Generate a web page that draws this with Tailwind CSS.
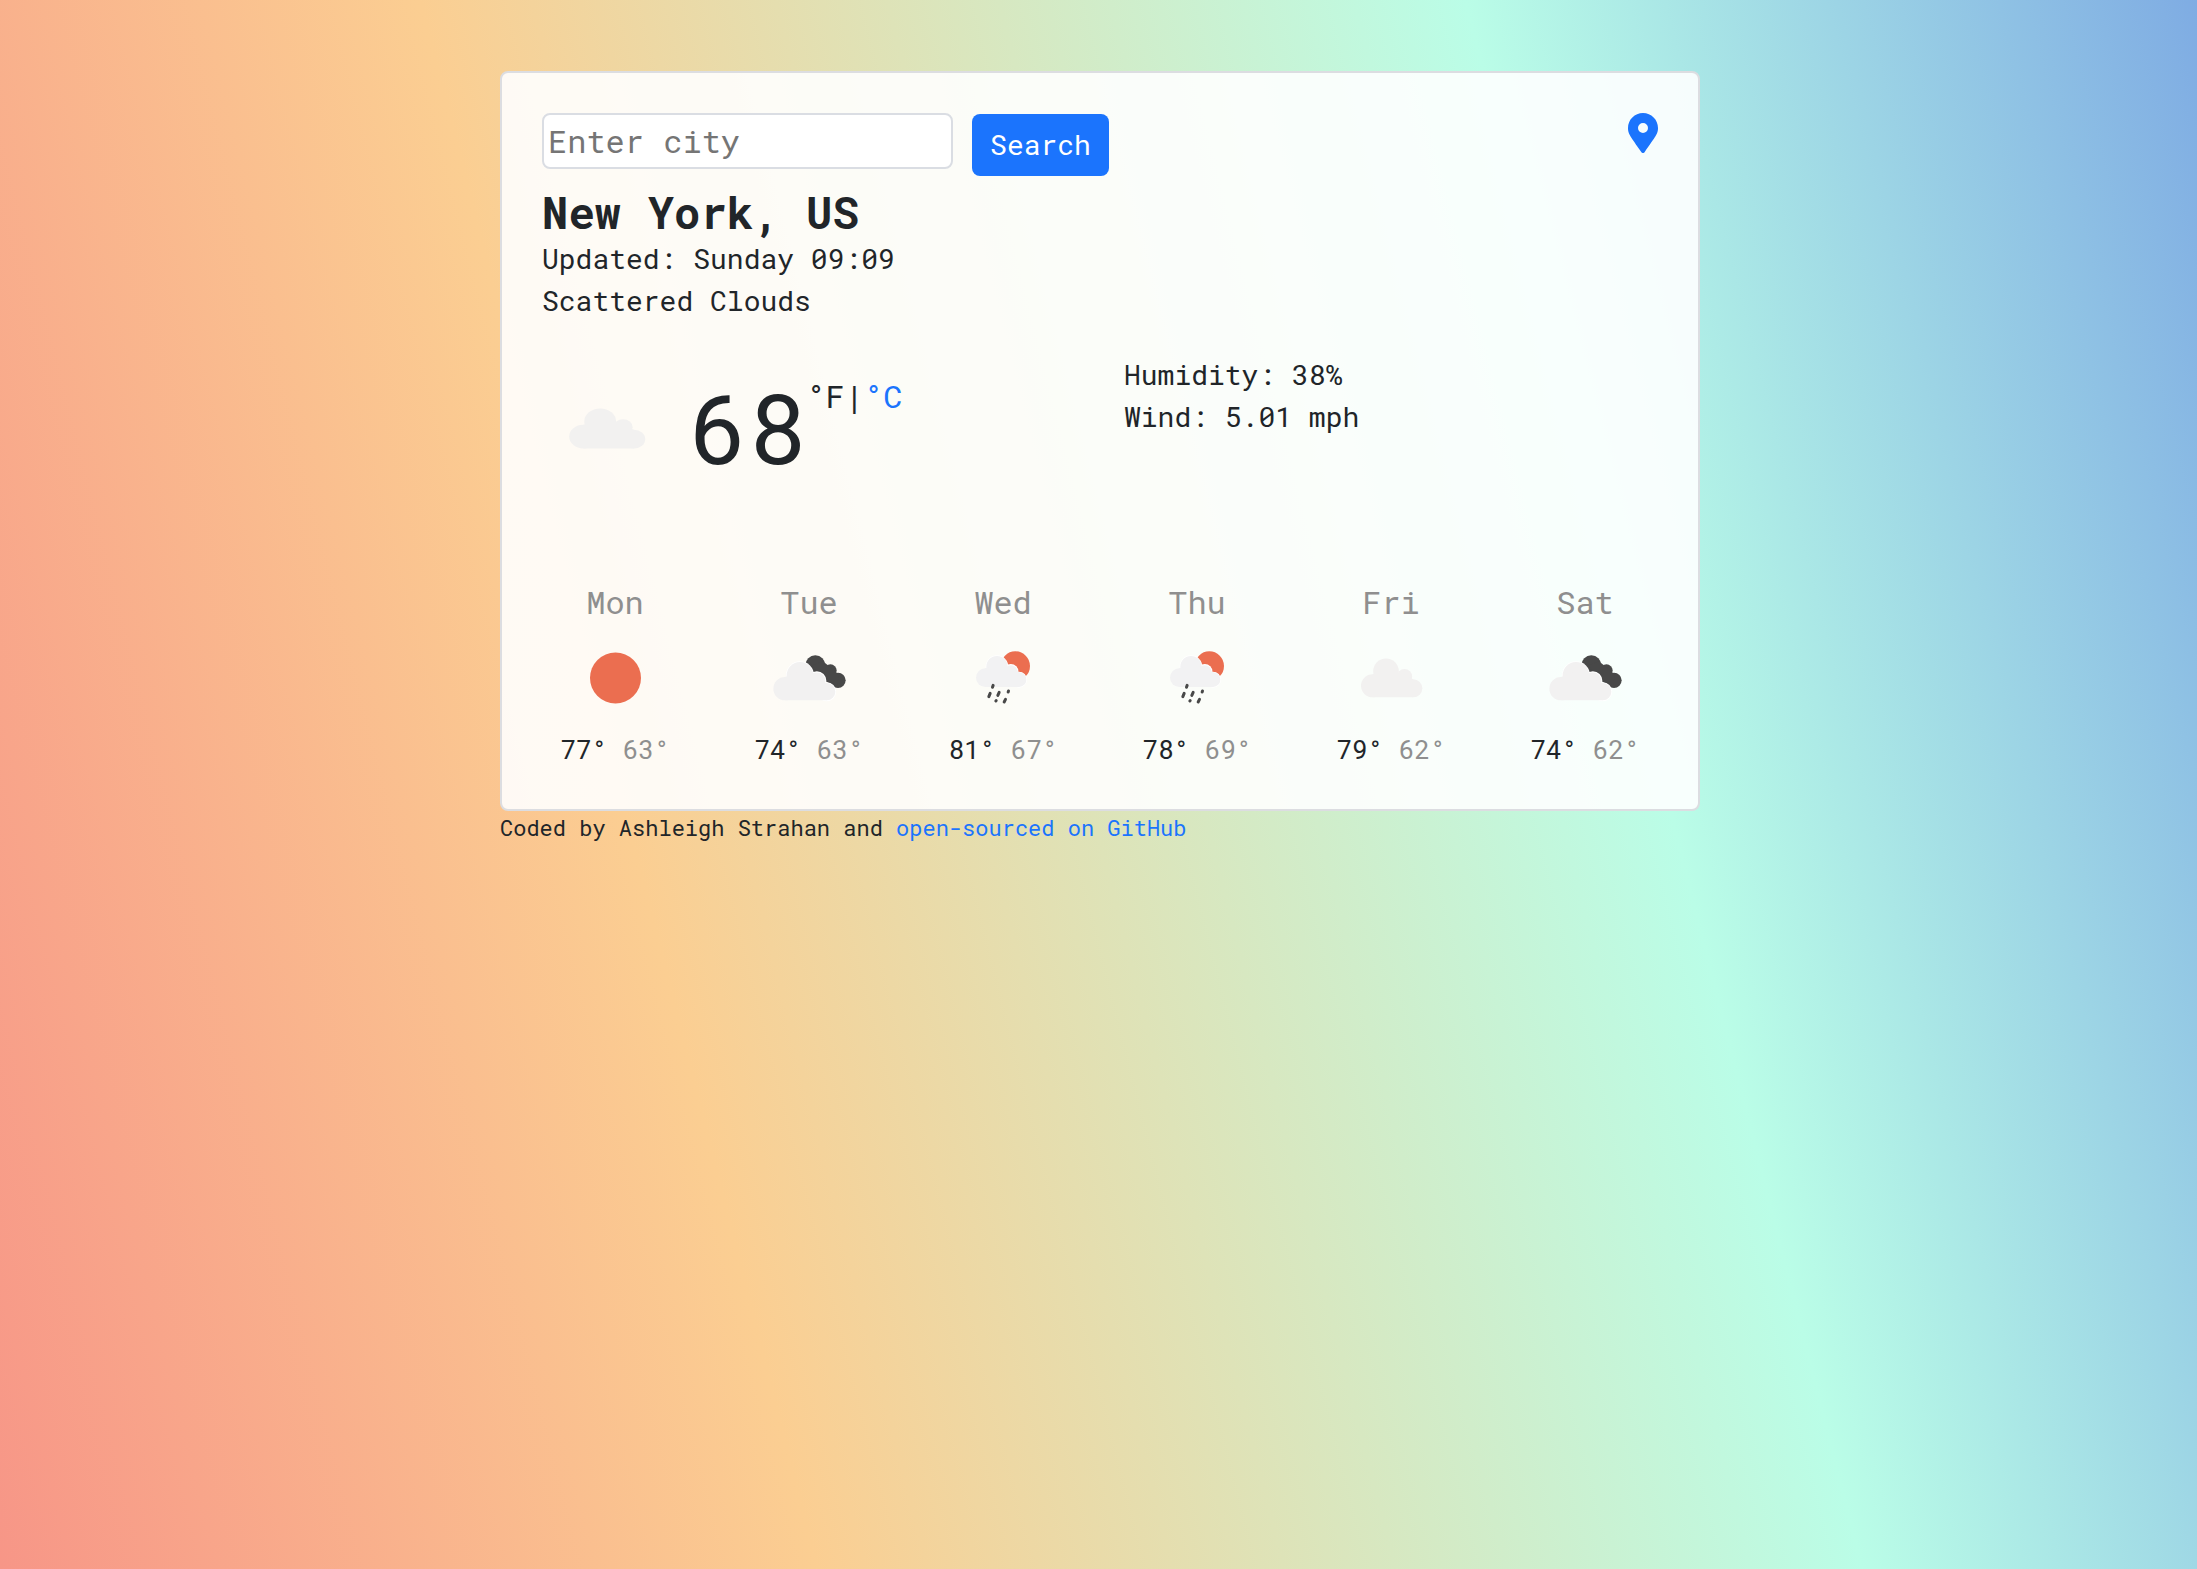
<!DOCTYPE html>
<html lang="en">
<head>
<meta charset="utf-8">
<title>Weather</title>
<script src="https://cdn.jsdelivr.net/npm/@tailwindcss/browser@4"></script>
</head>
<body class="h-screen overflow-hidden bg-[linear-gradient(75.8deg,#f79687_0%,#fbce92_31.5%,#bafde7_71.8%,#7facE3_100%)] font-['Roboto_Mono','DejaVu_Sans_Mono',monospace] text-[#212529]">
<svg width="0" height="0" class="absolute">
  <defs>
    <symbol id="cloud" viewBox="0 0 300 300" preserveAspectRatio="none">
      <g fill="#f2f1f0"><circle cx="93" cy="173.500" r="34.500"/><circle cx="133.500" cy="130" r="38.500"/><circle cx="189" cy="146" r="23"/><circle cx="215.500" cy="181" r="27"/><path d="M93 208V139L133 130L189 140L215 154V208z"/></g>
    </symbol>
    <symbol id="sun" viewBox="0 0 300 300"><circle cx="150" cy="150" r="76.500" fill="#eb6e50"/></symbol>
    <symbol id="broken" viewBox="0 0 300 300">
      <g fill="#484848"><circle cx="167.500" cy="112" r="30"/><circle cx="213" cy="127.500" r="18.500"/><circle cx="235.500" cy="157" r="23"/><path d="M160 112L190 100L213 118L238 140L232 178L180 150z"/></g>
      <g fill="#fff"><circle cx="121.500" cy="142" r="42"/><circle cx="172" cy="158" r="28.500"/><circle cx="201.500" cy="191" r="28.500"/></g>
      <g fill="#f2f1f1"><circle cx="76.500" cy="182" r="35"/><circle cx="121.500" cy="142" r="40"/><circle cx="172" cy="159" r="25.500"/><circle cx="201.500" cy="191" r="26"/><path d="M76.500 217V147L121 130L172 150L201 166V217z"/></g>
    </symbol>
    <symbol id="rain" viewBox="0 0 300 300">
      <circle cx="185.500" cy="114" r="44" fill="#eb6e50"/>
      <g fill="#fff"><circle cx="130.500" cy="116" r="34"/><circle cx="172" cy="131" r="23"/><circle cx="196.500" cy="155" r="24"/></g>
      <g fill="#f2f2f3"><circle cx="95.500" cy="149" r="28"/><circle cx="130.500" cy="116" r="32"/><circle cx="172" cy="132" r="20.500"/><circle cx="196.500" cy="155" r="22"/><path d="M95.500 177V121L130 110L172 120L196 133V177z"/></g>
      <path d="M119 172l-2 6M110 196l-4 10M137 193l-4 9M165 189l-1 3M128 218l-1 1M156 214l-4 8" stroke="#484848" stroke-width="9" stroke-linecap="round" fill="none"/>
    </symbol>
  </defs>
</svg>
<div class="ml-[500px] w-[1200px] pt-[71px]">
  <main class="h-[740px] w-full rounded-lg border-2 border-[#dcdde1] bg-white/90 px-10 pt-10">
    <div class="flex items-start">
      <input type="text" placeholder="Enter city" class="h-14 w-[411px] rounded-lg border-2 border-[#dadde3] bg-white px-1 pb-0.5 text-[32px] placeholder-[#757575]">
      <button class="mt-px ml-[19px] h-[62px] w-[137px] rounded-lg bg-[#1b74fd] text-[28px] text-white">Search</button>
      <svg class="ml-auto h-10 w-[30px]" viewBox="0 0 384 512"><path fill="#1b74fd" d="M192 0C86 0 0 86 0 192c0 77 27 99 172 310 10 14 30 14 40 0 145-211 172-233 172-310C384 86 298 0 192 0zm0 256a64 64 0 1 1 0-128 64 64 0 0 1 0 128z"/></svg>
    </div>
    <h1 class="mt-3 text-[44px] leading-[48px] font-bold">New York, US</h1>
    <ul class="pt-0.5 text-[28px] leading-[42px]">
      <li>Updated: Sunday 09:09</li>
      <li>Scattered Clouds</li>
    </ul>
    <section class="mt-8 grid h-56 grid-cols-2 gap-12">
      <div class="flex items-start pt-[21px] pl-[3px]">
        <svg class="mt-0.5 h-[103px] w-[124px]"><use href="#cloud"/></svg>
        <span class="ml-[20px] pt-0.5 text-[97px] leading-[98px] tracking-[0.005em]">68</span>
        <span class="text-[32px] leading-[42px]">°F|<a href="#" class="text-[#1b74fd]">°C</a></span>
      </div>
      <ul class="text-[28px] leading-[42px]">
        <li>Humidity: 38%</li>
        <li>Wind: 5.01 mph</li>
      </ul>
    </section>
    <section class="-mx-6 grid grid-cols-6 text-center text-[26px] leading-10">
      <div><div class="text-[32px] leading-[48px] text-[#8f8f8f]">Mon</div><svg class="mx-auto mt-0.5 size-[100px] translate-x-[0.5px]"><use href="#sun"/></svg><div class="mt-px">77° <span class="text-[#8f8f8f]">63°</span></div></div>
      <div><div class="text-[32px] leading-[48px] text-[#8f8f8f]">Tue</div><svg class="mx-auto mt-0.5 size-[100px] translate-x-[0.5px]"><use href="#broken"/></svg><div class="mt-px">74° <span class="text-[#8f8f8f]">63°</span></div></div>
      <div><div class="text-[32px] leading-[48px] text-[#8f8f8f]">Wed</div><svg class="mx-auto mt-0.5 size-[100px] translate-x-[0.5px]"><use href="#rain"/></svg><div class="mt-px">81° <span class="text-[#8f8f8f]">67°</span></div></div>
      <div><div class="text-[32px] leading-[48px] text-[#8f8f8f]">Thu</div><svg class="mx-auto mt-0.5 size-[100px] translate-x-[0.5px]"><use href="#rain"/></svg><div class="mt-px">78° <span class="text-[#8f8f8f]">69°</span></div></div>
      <div><div class="text-[32px] leading-[48px] text-[#8f8f8f]">Fri</div><svg class="mx-auto mt-0.5 size-[100px] translate-x-[0.5px]"><use href="#cloud"/></svg><div class="mt-px">79° <span class="text-[#8f8f8f]">62°</span></div></div>
      <div><div class="text-[32px] leading-[48px] text-[#8f8f8f]">Sat</div><svg class="mx-auto mt-0.5 size-[100px] translate-x-[0.5px]"><use href="#broken"/></svg><div class="mt-px">74° <span class="text-[#8f8f8f]">62°</span></div></div>
    </section>
  </main>
  <footer class="text-[22px] leading-[33px]">Coded by Ashleigh Strahan and <a href="#" class="text-[#1b74fd]">open-sourced on GitHub</a></footer>
</div>
</body>
</html>
